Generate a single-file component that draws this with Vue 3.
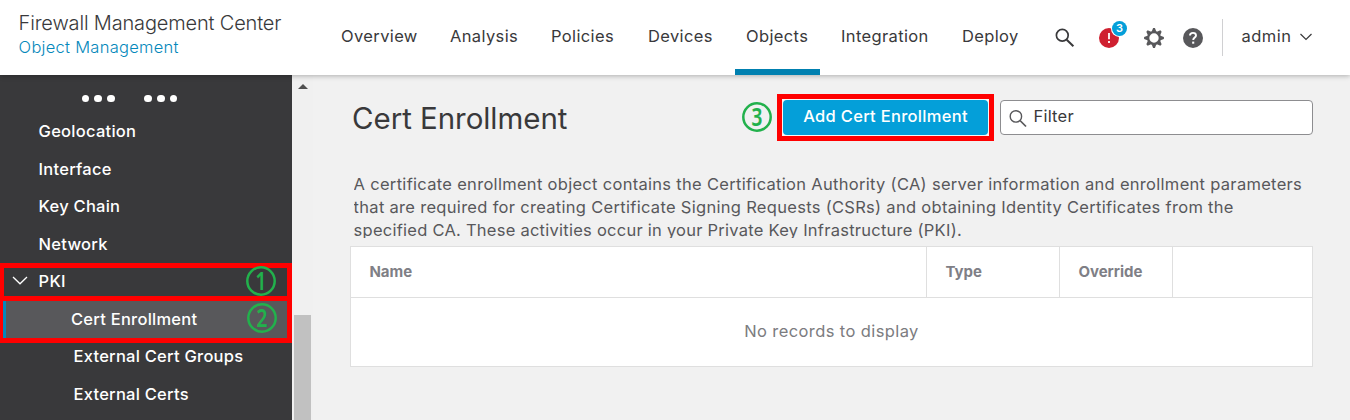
<script setup>
const nav = [
  { label: 'Overview', w: 109 },
  { label: 'Analysis', w: 101 },
  { label: 'Policies', w: 97 },
  { label: 'Devices', w: 98 },
  { label: 'Objects', w: 95, active: true },
  { label: 'Integration', w: 121 },
  { label: 'Deploy', w: 90 },
]
const topItems = ['Geolocation', 'Interface', 'Key Chain', 'Network']
const columns = ['Name', 'Type', 'Override', '']
const teeth = [0, 45, 90, 135, 180, 225, 270, 315]
</script>

<template>
  <div class="app">
    <header class="header">
      <div class="brand">
        <div class="product">Firewall Management Center</div>
        <div class="section">Object Management</div>
      </div>
      <nav class="nav">
        <a v-for="n in nav" :key="n.label" class="nav-item" :class="{ active: n.active }" :style="{ width: n.w + 'px' }">
          <span>{{ n.label }}</span>
        </a>
      </nav>
      <div class="tools">
        <svg class="tool search" viewBox="0 0 20 20" width="20" height="20">
          <circle cx="7.3" cy="7.3" r="5.9" fill="none" stroke="#39393b" stroke-width="1.7" />
          <path d="M11.7 11.7L18.4 18.3" stroke="#39393b" stroke-width="2" />
        </svg>
        <div class="alert">
          <svg viewBox="0 0 20 20" width="20" height="20">
            <circle cx="10" cy="10" r="10" fill="#cf2030" />
            <path d="M10 5v6.3M10 13.1v2" stroke="#fff" stroke-width="1.8" />
          </svg>
          <span class="badge">3</span>
        </div>
        <svg class="tool gear" viewBox="0 0 20 20" width="20" height="20">
          <circle cx="10" cy="10" r="5.8" fill="none" stroke="#58585b" stroke-width="2.2" />
          <path v-for="t in teeth" :key="t" :transform="`rotate(${t} 10 10)`" d="M7.4 4.2L9.1 0.1H10.9L12.6 4.2Z" fill="#58585b" />
        </svg>
        <svg class="tool help" viewBox="0 0 20 20" width="20" height="20">
          <circle cx="10" cy="10" r="10" fill="#58585b" />
          <path d="M7 7.6C7 5.7 8.2 4.9 10 4.9S13 5.8 13 7.4C13 9.4 10.2 9.5 10.2 12" fill="none" stroke="#fff" stroke-width="1.9" />
          <path d="M10.2 13.6v2.1" stroke="#fff" stroke-width="2.1" />
        </svg>
        <div class="user">
          <span>admin</span>
          <svg viewBox="0 0 12 8" width="12" height="8"><path d="M0.5 1L6 6.5L11.5 1" fill="none" stroke="#39393b" stroke-width="1.2" /></svg>
        </div>
      </div>
    </header>

    <div class="body">
      <aside class="sidebar">
        <div class="dots">
          <i v-for="n in 6" :key="n"></i>
        </div>
        <div v-for="t in topItems" :key="t" class="row">{{ t }}</div>
        <div class="row parent">
          <svg class="chev" viewBox="0 0 16 9" width="16" height="9"><path d="M1 1L8 7.8L15 1" fill="none" stroke="#fff" stroke-width="1.3" /></svg>
          PKI
          <div class="mark first"></div>
          <svg class="num n1" viewBox="0 0 30 30" width="30" height="30">
            <circle cx="15" cy="15" r="13.7" /><text transform="translate(15 24) scale(.76 1)">1</text>
          </svg>
        </div>
        <div class="row child selected">
          Cert Enrollment
          <div class="mark second"></div>
          <svg class="num n2" viewBox="0 0 30 30" width="30" height="30">
            <circle cx="15" cy="15" r="13.7" /><text transform="translate(15 24) scale(.76 1)">2</text>
          </svg>
        </div>
        <div class="row child">External Cert Groups</div>
        <div class="row child">External Certs</div>
      </aside>
      <div class="scroll">
        <div class="up"></div>
        <div class="thumb"></div>
      </div>

      <main class="main">
        <div class="titlebar">
          <h1>Cert Enrollment</h1>
          <svg class="num n3" viewBox="0 0 30 30" width="30" height="30">
            <circle cx="15" cy="15" r="13.7" /><text transform="translate(15 24) scale(.76 1)">3</text>
          </svg>
          <div class="callout"><button class="add">Add Cert Enrollment</button></div>
          <div class="filter">
            <svg viewBox="0 0 18 18" width="18" height="18">
              <circle cx="6.9" cy="6.4" r="5.7" fill="none" stroke="#58585b" stroke-width="1.4" />
              <path d="M11 10.5L17 16.5" stroke="#58585b" stroke-width="1.7" />
            </svg>
            <span>Filter</span>
          </div>
        </div>
        <p class="desc">
          A certificate enrollment object contains the Certification Authority (CA) server information and enrollment parameters<br />
          that are required for creating Certificate Signing Requests (CSRs) and obtaining Identity Certificates from the<br />
          <span class="last">specified CA. These activities occur in your Private Key Infrastructure (PKI).</span>
        </p>
        <div class="table">
          <div class="thead">
            <div v-for="c in columns" :key="c" class="th">{{ c }}</div>
          </div>
          <div class="empty">No records to display</div>
        </div>
      </main>
    </div>
  </div>
</template>

<style>
body { margin: 0; overflow: hidden; }
</style>

<style scoped>
.app {
  width: 1350px;
  height: 420px;
  overflow: hidden;
  background: #f1f1f1;
  font-family: Inter, "Liberation Sans", sans-serif;
  font-size: 16.5px;
  color: #58585b;
}
.header {
  position: relative;
  z-index: 2;
  display: flex;
  height: 75px;
  background: #fff;
  box-shadow: 0 1px 5px rgba(0, 0, 0, .28);
}
.brand { width: 341px; box-sizing: border-box; padding: 11px 0 0 18.6px; white-space: nowrap; }
.product { font-size: 20px; line-height: 24px; font-weight: 300; letter-spacing: -.17px; color: #39393b; }
.section { font-size: 16.5px; line-height: 24px; font-weight: 300; letter-spacing: .28px; color: #0488bb; }
.nav { display: flex; }
.nav-item { letter-spacing: .37px; line-height: 72px; color: #39393b; position: relative; }
.nav-item.active::after {
  content: "";
  position: absolute;
  left: -11px;
  top: 69px;
  width: 85px;
  height: 6px;
  background: #0080b0;
}
.tools { display: flex; align-items: flex-start; margin-left: 3px; }
.tool, .alert { flex: none; }
.search { margin-top: 28px; }
.alert { position: relative; width: 20px; height: 20px; margin: 28px 0 0 24px; }
.alert svg { display: block; }
.badge {
  position: absolute;
  left: 13px;
  top: -7px;
  width: 15px;
  height: 15px;
  border-radius: 50%;
  background: #049fd9;
  box-shadow: 0 0 0 1px #fff;
  color: #fff;
  font-size: 11px;
  font-weight: 600;
  line-height: 15px;
  text-align: center;
}
.gear { margin: 28px 0 0 25px; }
.help { margin: 28px 0 0 19px; }
.user {
  display: flex;
  align-items: center;
  height: 37px;
  margin: 19px 0 0 19px;
  padding-left: 18.5px;
  border-left: 1px solid #d0d0d2;
  color: #39393b;
  letter-spacing: .5px;
}
.user span { line-height: 34px; margin-bottom: 3px; }
.user svg { margin: 0 0 1px 8px; }

.body { display: flex; height: 345px; }
.sidebar { width: 292px; height: 345px; background: #39393b; color: #fff; font-weight: 500; letter-spacing: .25px; overflow: hidden; flex: none; }
.dots { display: flex; height: 37.5px; padding-left: 81.5px; box-sizing: border-box; padding-top: 20px; }
.dots i { width: 7.4px; height: 7.4px; border-radius: 50%; background: #fff; margin-right: 5.5px; }
.dots i:nth-child(3) { margin-right: 29.6px; }
.row { position: relative; height: 37.5px; line-height: 38.5px; padding-left: 38.6px; box-sizing: border-box; }
.row:nth-child(even) { line-height: 37.5px; }
.row.child { padding-left: 73.5px; }
.row.selected { padding-left: 71px; background: #58585b; }
.chev { position: absolute; left: 12px; top: 13px; }
.mark { position: absolute; box-sizing: border-box; left: 0; width: 292px; border: 5px solid #f00; }
.mark.first { top: .5px; height: 38px; border-left-width: 4px; }
.mark.second { top: -4px; height: 47px; border-left-width: 3px; z-index: 1; }
.mark.second::before { content: ""; display: block; width: 3px; height: 100%; background: #0488bb; }
.num { display: block; overflow: visible; }
.num circle { fill: none; stroke: #22b14c; stroke-width: 2.5; }
.num text { font: 600 25px/1 "Noto Sans", sans-serif; fill: #22b14c; stroke: #22b14c; stroke-width: .2px; text-anchor: middle; letter-spacing: 0; }
.n1 { position: absolute; left: 246px; top: 3.5px; }
.n2 { position: absolute; left: 247px; top: 3px; z-index: 2; }

.scroll { width: 21px; flex: none; background: #f0f0f0; }
.up { width: 0; margin: 9px 0 0 6px; border: 5px solid transparent; border-top: 0; border-bottom: 5px solid #505050; }
.thumb { width: 17px; height: 105px; margin: 226px 0 0 2px; background: #c1c1c1; }

.main { flex: 1; padding: 19px 37px 0 37px; }
.titlebar { display: flex; height: 47px; }
h1 { width: 390px; margin: 0 0 0 2px; font-size: 29.5px; font-weight: 400; line-height: 49px; letter-spacing: -.05px; color: #39393b; }
.n3 { margin-top: 8px; flex: none; }
.callout { flex: none; box-sizing: border-box; width: 217px; height: 47px; margin-left: 5px; border: 5px solid #f00; padding: 1px; background: #f7f7f7; }
.add { display: block; width: 205px; height: 35px; padding: 0 0 2px; border: 0; border-radius: 4px; background: #049fd9; color: #fff; font: 500 16.5px/33px Inter, sans-serif; letter-spacing: .3px; white-space: nowrap; }
.filter { display: flex; box-sizing: border-box; width: 313px; height: 35px; margin: 6px 0 0 6px; flex: none; border: 1px solid #8d8d90; border-radius: 4px; background: #fff; color: #39393b; letter-spacing: .25px; }
.filter svg { margin: 9px 0 0 8px; }
.filter span { line-height: 30px; margin-left: 6.4px; }
.desc { margin: 32px 0 0 3.6px; line-height: 23px; letter-spacing: .3px; white-space: nowrap; height: 65px; overflow: hidden; }
.last { letter-spacing: .25px; }
.table { box-sizing: border-box; width: 963px; height: 121px; margin-top: 8px; background: #fff; border: 1px solid #dfdfdf; }
.thead { display: grid; grid-template-columns: 575px 133px 113px 1fr; height: 50px; border-bottom: 1px solid #dfdfdf; }
.thead { grid-template-columns: 576px 133px 113px 1fr; }
.th { padding-left: 18.4px; border-right: 1px solid #dfdfdf; font-size: 15px; font-weight: 700; line-height: 50px; color: #7f7f86; }
.th:last-child { border-right: 0; }
.empty { text-align: center; line-height: 66px; letter-spacing: .4px; color: #7c7c80; }
</style>
